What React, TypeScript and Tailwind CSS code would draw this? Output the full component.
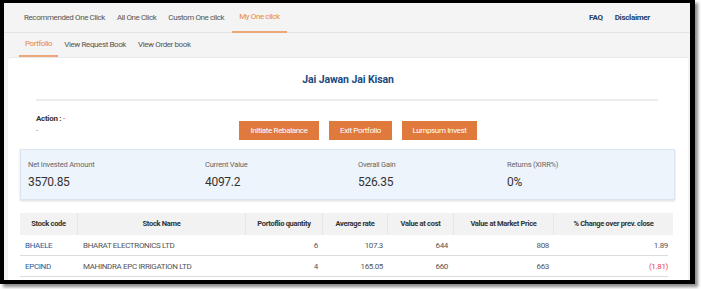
import React from "react";

const font = { fontFamily: "Roboto, 'Open Sans', sans-serif" };

const rows = [
  { code: "BHAELE", name: "BHARAT ELECTRONICS LTD", qty: "6", avg: "107.3", cost: "644", mkt: "808", chg: "1.89", neg: false },
  { code: "EPCIND", name: "MAHINDRA EPC IRRIGATION LTD", qty: "4", avg: "165.05", cost: "660", mkt: "663", chg: "(1.81)", neg: true },
];

export default function App() {
  return (
    <div className="w-[701px] h-[289px] bg-white overflow-hidden" style={font}>
      <div className="w-[695px] h-[284px] border-black border-l-[4px] border-t-[3px] border-r-[5px] border-b-[4px] shadow-[3px_3px_3px_rgba(0,0,0,0.45)] bg-[#f4f4f4] overflow-hidden flex flex-col">
        {/* Top nav */}
        <div className="h-[30px] flex items-center border-b border-[#e3e3e3] pl-[14px] pr-[40px] text-[8px] tracking-[-0.4px] text-[#555] shrink-0">
          <div className="h-full flex items-center px-[6px]">Recommended One Click</div>
          <div className="h-full flex items-center px-[6px]">All One Click</div>
          <div className="h-full flex items-center px-[6px]">Custom One click</div>
          <div className="h-full flex items-center px-[7px] ml-[2px] text-[#e8864a] border-b-2 border-[#eea57a] mb-[-1px]">My One click</div>
          <div className="ml-auto flex items-center gap-[12px] font-bold text-[#1e3f6b] tracking-[-0.3px]">
            <span>FAQ</span>
            <span>Disclaimer</span>
          </div>
        </div>
        {/* Sub nav */}
        <div className="h-[24px] flex items-center pl-[15px] text-[8px] tracking-[-0.4px] text-[#555] shrink-0">
          <div className="h-full flex items-center px-[6px] text-[#e8864a] border-b-2 border-[#eea57a]">Portfolio</div>
          <div className="h-full flex items-center px-[6px]">View Request Book</div>
          <div className="h-full flex items-center px-[6px]">View Order book</div>
        </div>
        {/* Card */}
        <div className="flex-1 bg-white ml-[4px] mr-[2px] rounded-tl-[3px] border-t border-[#eaeaea] flex flex-col">
          <div className="mt-[15px] h-[14px] flex items-center justify-center text-[10.5px] font-bold text-[#1b4a80] tracking-[-0.1px]">
            Jai Jawan Jai Kisan
          </div>
          <div className="mt-[12px] ml-[28px] mr-[30px] h-[2px] bg-[#ececec]" />
          <div className="flex mt-[12px] ml-[28px]">
            <div className="w-[203px] text-[8px] tracking-[-0.3px] leading-[12px]">
              <div className="font-bold text-[#333]">
                Action : <span className="text-[#e53935] font-normal">-</span>
              </div>
              <div className="text-[#888]">-</div>
            </div>
            <div className="flex gap-[10px] mt-[8px] text-[8px] tracking-[-0.35px] text-white">
              <div className="w-[80px] h-[19px] bg-[#e07a3c] flex items-center justify-center">Initiate Rebalance</div>
              <div className="w-[63px] h-[19px] bg-[#e07a3c] flex items-center justify-center">Exit Portfolio</div>
              <div className="w-[75px] h-[19px] bg-[#e07a3c] flex items-center justify-center">Lumpsum Invest</div>
            </div>
          </div>
          <div className="mt-[9px] ml-[12px] mr-[13px] h-[51px] bg-[#eef4fc] border border-[#dbe5f0] shadow-[0_1px_2px_rgba(0,0,0,0.15)] grid grid-cols-[177px_153px_149px_1fr] pl-[7px] pt-[9px]">
            {[
              ["Net Invested Amount", "3570.85"],
              ["Current Value", "4097.2"],
              ["Overall Gain", "526.35"],
              ["Returns (XIRR%)", "0%"],
            ].map(([l, v]) => (
              <div key={l} className="flex flex-col">
                <div className="text-[7.5px] tracking-[-0.2px] text-[#666] leading-[12px]">{l}</div>
                <div className="text-[12px] tracking-[-0.3px] text-[#333] leading-[16px] mt-[3px]">{v}</div>
              </div>
            ))}
          </div>
          <div className="mt-[13px] ml-[12px] mr-[15px]">
            <div className="grid grid-cols-[57px_168px_77px_65px_66px_100px_1fr] h-[22px] bg-[#f2f2f2] text-[7.5px] font-bold text-[#333] tracking-[-0.3px]">
              {["Stock code", "Stock Name", "Portoflio quantity", "Average rate", "Value at cost", "Value at Market Price", "% Change over prev. close"].map((h, i) => (
                <div key={h} className={"flex items-center justify-center " + (i > 0 ? "border-l border-[#e6e6e6]" : "")}>{h}</div>
              ))}
            </div>
            {rows.map((r) => (
              <div key={r.code} className="grid grid-cols-[57px_168px_77px_65px_66px_100px_1fr] h-[21px] border-b border-[#dcdcdc] text-[8px] tracking-[-0.35px] text-[#555] mr-[5px] pt-[2px]">
                <div className="flex items-center pl-[5px] text-[#2a5d98]">{r.code}</div>
                <div className="flex items-center pl-[6px]">{r.name}</div>
                <div className="flex items-center justify-end pr-[4px]">{r.qty}</div>
                <div className="flex items-center justify-end pr-[4px]">{r.avg}</div>
                <div className="flex items-center justify-end pr-[5px]">{r.cost}</div>
                <div className="flex items-center justify-end pr-[4px]">{r.mkt}</div>
                <div className={"flex items-center justify-end " + (r.neg ? "text-[#e8404f]" : "")}>{r.chg}</div>
              </div>
            ))}
          </div>
        </div>
      </div>
    </div>
  );
}
